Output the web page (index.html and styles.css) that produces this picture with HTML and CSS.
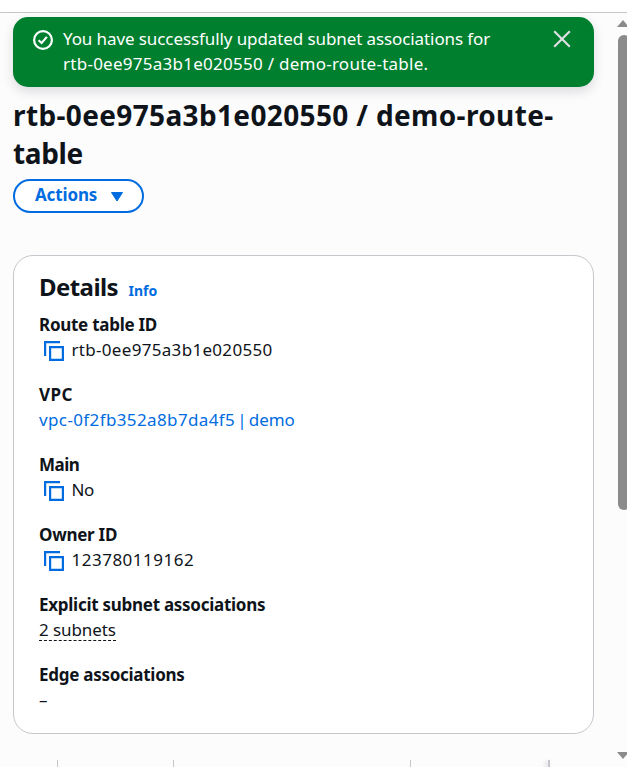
FILE: index.html
```html
<!DOCTYPE html>
<html lang="en">
<head>
<meta charset="utf-8">
<title>Route table details</title>
<link rel="stylesheet" href="styles.css">
</head>
<body>
<div class="topbar"></div>
<div class="viewport">
  <main class="content">
    <div class="flash">
      <svg class="flash-icon" width="20" height="20" viewBox="0 0 20 20"><circle cx="10" cy="10" r="8.9"/><path d="M5.6 10.2l3 2.8 5.3-6.1"/></svg>
      <p class="flash-text"><span class="flash-first">You have successfully updated subnet associations for</span><br><span class="flash-second">rtb-0ee975a3b1e020550 / demo-route-table.</span></p>
      <svg class="flash-close" width="18" height="18" viewBox="0 0 18 18"><path d="M1.2 1.2l15.6 15.6M16.8 1.2L1.2 16.8"/></svg>
    </div>
    <h1 class="title"><span class="title-first">rtb-0ee975a3b1e020550 / demo-route-</span><br><span class="title-second">table</span></h1>
    <button class="actions"><span class="actions-label">Actions</span><svg width="14" height="12" viewBox="0 0 14 12"><path d="M1.5 1.5h11L7 10z"/></svg></button>
    <section class="card">
      <header class="card-head"><h2>Details</h2><a class="info">Info</a></header>
      <dl class="fields">
        <div class="field"><dt>Route table ID</dt><dd><svg class="copy" width="20" height="20" viewBox="0 0 20 20"><path d="M1.1 15V1.1H16M6.1 6.1h12.8v12.8H6.1z"/></svg><span class="v-route">rtb-0ee975a3b1e020550</span></dd></div>
        <div class="field"><dt class="k-vpc">VPC</dt><dd><a class="link"><span class="v-vpc">vpc-0f2fb352a8b7da4f5</span><span class="v-name"> | demo</span></a></dd></div>
        <div class="field"><dt class="k-main">Main</dt><dd><svg class="copy" width="20" height="20" viewBox="0 0 20 20"><path d="M1.1 15V1.1H16M6.1 6.1h12.8v12.8H6.1z"/></svg><span class="v-main">No</span></dd></div>
        <div class="field"><dt>Owner ID</dt><dd><svg class="copy" width="20" height="20" viewBox="0 0 20 20"><path d="M1.1 15V1.1H16M6.1 6.1h12.8v12.8H6.1z"/></svg><span class="v-owner">123780119162</span></dd></div>
        <div class="field"><dt>Explicit subnet associations</dt><dd><span class="dashed">2 subnets</span></dd></div>
        <div class="field"><dt>Edge associations</dt><dd><span class="empty">–</span></dd></div>
      </dl>
    </section>
    <div class="tabs"><i class="tab-start"></i><i class="tab-first"></i><i class="tab-second"></i><i class="tab-scroll"></i></div>
  </main>
  <aside class="scrollbar">
    <svg width="12" height="7" viewBox="0 0 12 7"><path d="M0 7L6 0l6 7z"/></svg>
    <div class="thumb"></div>
    <svg class="down" width="12" height="7" viewBox="0 0 12 7"><path d="M0 0h12L6 7z"/></svg>
  </aside>
</div>
</body>
</html>
```
FILE: styles.css
```css
* { box-sizing: border-box; }
html, body { height: 100%; }
body { margin: 0; background: #fcfcfd; color: #0f141a; font: 17px/25px "Noto Sans", "Open Sans", sans-serif; overflow: hidden; display: flex; flex-direction: column; }
h1, h2, p, dl, dt, dd { margin: 0; }
svg { display: block; flex: none; }
.topbar { height: 13px; flex: none; background: #fff; border-bottom: 1px solid #c6c6cd; }
.viewport { flex: 1; min-height: 0; display: flex; justify-content: space-between; }
.content { width: 581px; margin-left: 13px; padding-top: 4px; white-space: nowrap; }
.flash { height: 70px; border-radius: 15px; background: #00802f; color: #fff; display: flex; align-items: flex-start; padding: 9px 23px 0 20px; box-shadow: 0 5px 12px rgba(0, 7, 22, .13); }
.flash-icon { margin-top: 4px; fill: none; stroke: #fff; stroke-width: 2.2; }
.flash-text { margin-left: 10px; flex: 1; }
.flash-first { letter-spacing: -.095px; }
.flash-second { letter-spacing: .26px; }
.flash-close { margin-top: 4px; fill: none; stroke: #dedee3; stroke-width: 2.2; }
.title { margin-top: 9px; font-size: 28px; line-height: 38px; font-weight: 700; }
.title-first { letter-spacing: .36px; }
.title-second { letter-spacing: -.35px; }
.actions { margin-top: 7px; width: 131px; height: 34px; display: flex; align-items: center; padding: 0 0 3px 20px; border: 2px solid #006ce0; border-radius: 17px; background: #fff; color: #006ce0; font: 700 17px/25px "Noto Sans", sans-serif; letter-spacing: -.14px; }
.actions svg { margin-left: auto; margin-right: 18px; fill: #006ce0; stroke: #006ce0; stroke-linejoin: round; position: relative; top: 2px; }
.card { margin-top: 42px; height: 479px; border: 1px solid #c6c6cd; border-radius: 20px; background: #fff; padding: 16px 25px 0; }
.card-head { display: flex; align-items: baseline; height: 40px; }
h2 { font-size: 24px; line-height: 30px; letter-spacing: -.57px; }
.info { margin-left: 10.5px; font-size: 14px; font-weight: 700; color: #006ce0; }
.fields { display: flex; flex-direction: column; gap: 20px; }
dt { font-weight: 700; letter-spacing: -.27px; }
.k-vpc { letter-spacing: .5px; }
.k-main { letter-spacing: -.5px; }
dd { height: 25px; display: flex; align-items: center; }
.copy { margin: 2px 7.5px 0 5px; fill: none; stroke: #006ce0; stroke-width: 2.2; }
.v-route { letter-spacing: .31px; }
.v-owner { letter-spacing: .5px; }
.v-main { letter-spacing: -.3px; }
.v-vpc { letter-spacing: .38px; }
.v-name { word-spacing: -2.2px; letter-spacing: -.08px; }
.link { color: #006ce0; }
.dashed { border-bottom: 1px dashed #0f141a; line-height: 22px; padding-top: 1px; height: 23px; letter-spacing: -.1px; }
.tabs { margin-top: 26px; height: 7px; display: flex; }
.tabs i { width: 1px; background: #c6c6cd; }
.tab-start { margin-left: 44px; }
.tab-first { margin-left: 115px; }
.tab-second { margin-left: 236px; }
.tabs .tab-scroll { margin-left: 137px; width: 2px; box-shadow: -2px 1px 4px rgba(0, 7, 22, .2); }
.scrollbar { width: 10px; display: flex; flex-direction: column; padding-top: 7px; overflow: hidden; fill: #8b8b8b; }
.scrollbar svg { margin-left: 0; }
.thumb { width: 12px; height: 475px; margin: 8px 0 0 1px; border-radius: 6px; background: #8b8b8b; }
.scrollbar .down { margin-top: auto; margin-bottom: 8px; }
```
